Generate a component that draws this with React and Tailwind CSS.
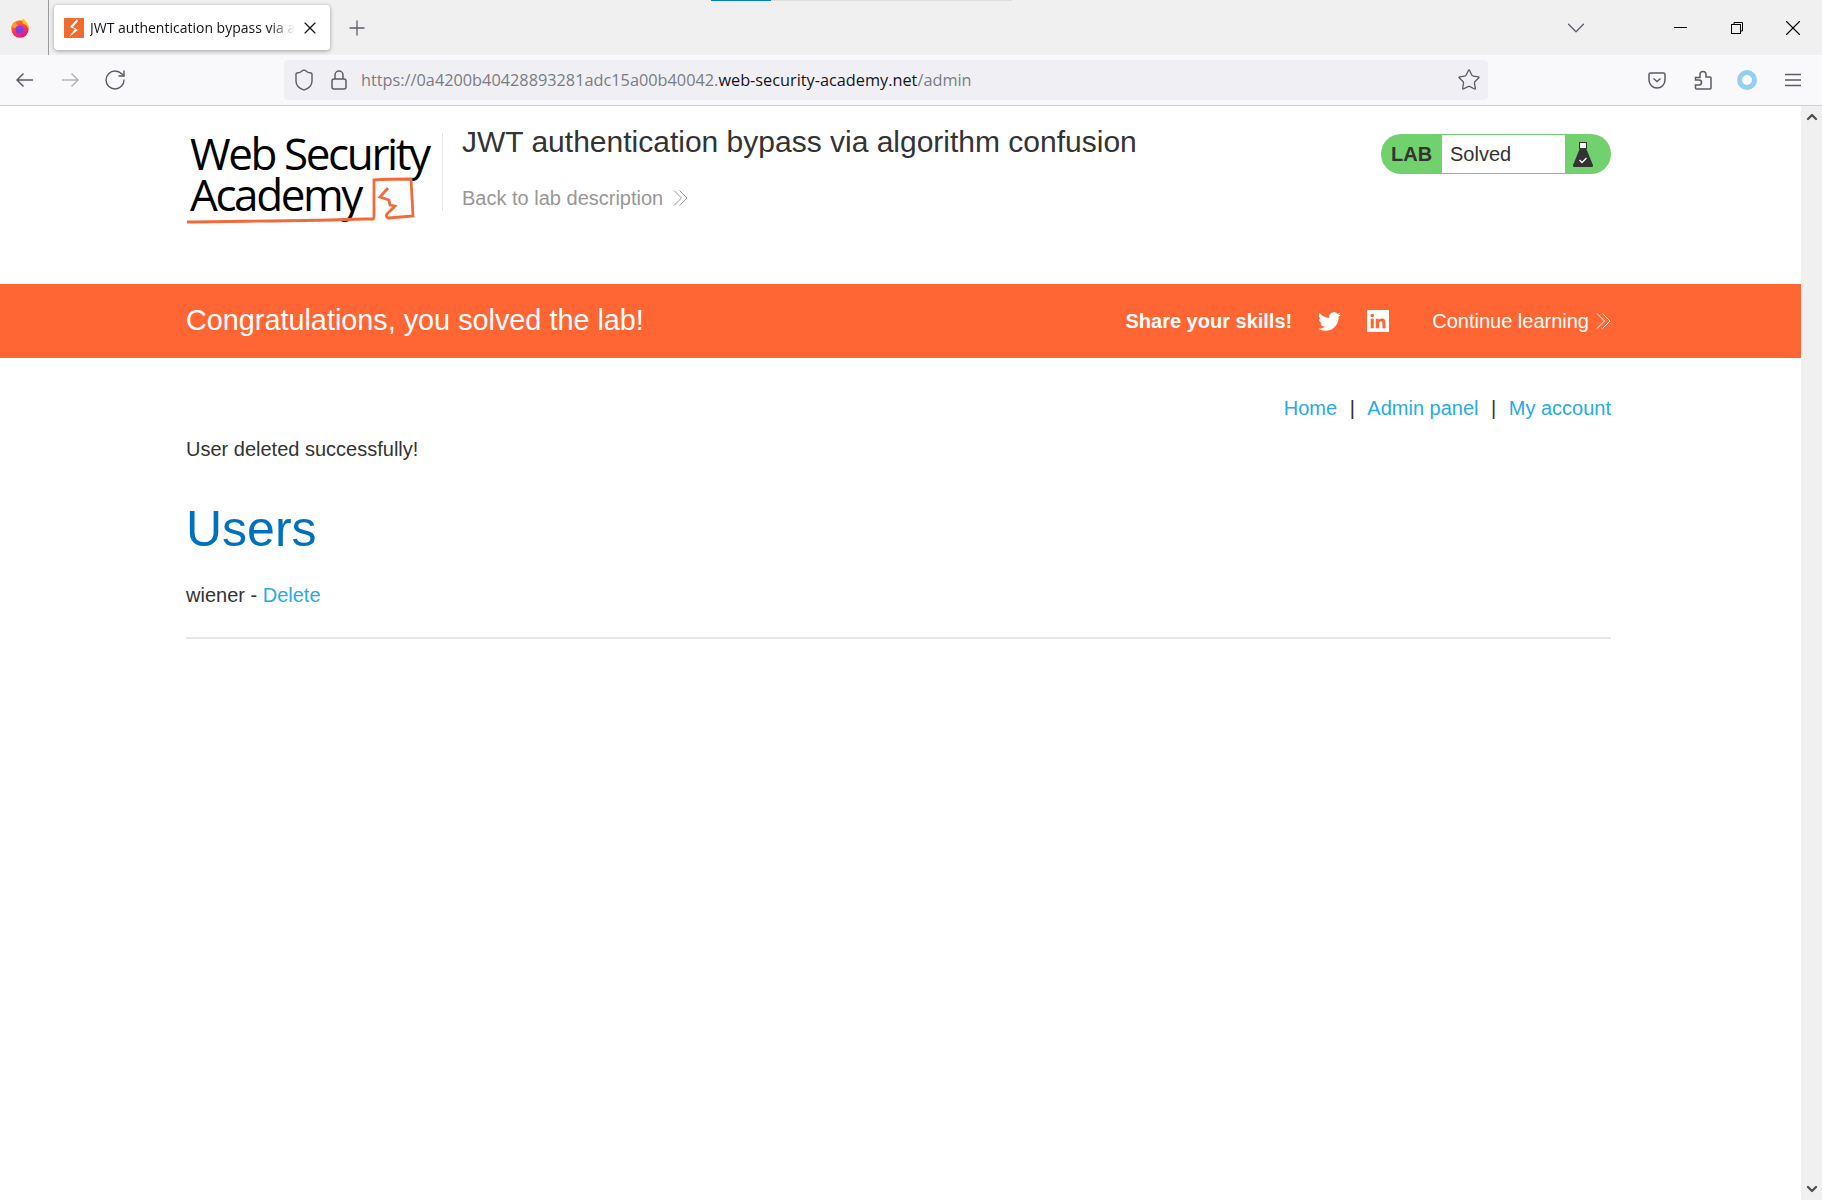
import { ChevronDown, Minus, X, Plus, RotateCw, Shield, Star, ChevronUp } from "lucide-react";

const Chevrons = ({ className }) => (
  <svg viewBox="0 0 15 16" className={className} fill="none" stroke="currentColor" strokeWidth="1">
    <path d="M1 .5L8.500 8 1 15.500M6.500 .5L14 8l-7.500 7.500" />
  </svg>
);

const Firefox = () => (
  <svg viewBox="0 0 20 20" className="h-5 w-5">
    <defs>
      <linearGradient id="ffBody" x1="0" y1="0" x2="0.6" y2="1">
        <stop offset="0" stopColor="#ff8a16" />
        <stop offset="0.6" stopColor="#ff3750" />
        <stop offset="1" stopColor="#e31587" />
      </linearGradient>
    </defs>
    <circle cx="10" cy="11" r="8.700" fill="url(#ffBody)" />
    <path d="M12 .5c4 2 7.500 6 6.700 11.500-.8-3.500-2.700-5.500-6-6.500z" fill="#ffc61e" />
    <path d="M1.500 9C2 6 3.500 4 5.500 3.500 5.500 6 7 7 9 7.500L5 10z" fill="#ff9a2e" />
    <circle cx="9.500" cy="11.500" r="4" fill="#7542e5" />
    <path d="M6 10c1.500-2 5-2 7 0-2 .5-5 .5-7 0z" fill="#b833e1" />
  </svg>
);

const BrowserChrome = () => (
  <div className="font-['Open_Sans',sans-serif]">
    <div className="relative flex h-[55px] items-center bg-[#f0f0f0]">
      <div className="absolute left-[711px] top-0 h-px w-[60px] bg-[#0078d7]" />
      <div className="absolute left-[771px] top-0 h-px w-[241px] bg-[#dedede]" />
      <div className="flex h-full w-[49px] shrink-0 items-center justify-center border-r border-[#9a9a9a] pr-[9px]">
        <Firefox />
      </div>
      <div className="ml-[5px] flex h-[45px] w-[276px] items-center rounded-[4px] bg-white pl-[10px] pr-[10px] shadow-[0_1px_4px_rgba(0,0,0,0.35)]">
        <svg viewBox="0 0 20 20" className="h-5 w-5 shrink-0">
          <rect width="20" height="20" fill="#f26a2e" />
          <path d="M13 1L6 9l5 2-6 8 9-7-5-3 5-6z" fill="#fff" />
        </svg>
        <span className="ml-[6px] whitespace-nowrap text-[14px] text-[#15141a] [mask-image:linear-gradient(to_right,black_88%,transparent)]">
          JWT authentication bypass via a
        </span>
        <X className="ml-auto h-5 w-5 shrink-0 text-[#15141a]" strokeWidth={1.400} />
      </div>
      <Plus className="ml-[15px] h-6 w-6 text-[#5b5b66]" strokeWidth={1.300} />
      <div className="ml-auto flex items-center">
        <ChevronDown className="mr-[79px] h-[30px] w-[30px] text-[#5b5b66]" strokeWidth={1} />
        <Minus className="mr-[40px] h-[21px] w-[21px] text-black" strokeWidth={1.100} />
        <svg viewBox="0 0 12 12" className="mr-[37px] h-3 w-3" fill="none" stroke="#000" strokeWidth="1">
          <rect x="0.500" y="2.500" width="9" height="9" />
          <path d="M3 2.500V.5h8.500V9h-2" />
        </svg>
        <X className="mr-[16px] h-[26px] w-[26px] text-black" strokeWidth={1} />
      </div>
    </div>
    <div className="flex h-[51px] items-center border-b border-[#cfcfd8] bg-[#f9f9fb]">
      <svg viewBox="0 0 18 16" className="ml-[15px] h-4 w-[18px]" fill="none" stroke="#5b5b66" strokeWidth="1.500">
        <path d="M18 8H2M8.500 1.500L2 8l6.500 6.500" />
      </svg>
      <svg viewBox="0 0 18 16" className="ml-[29px] h-4 w-[18px]" fill="none" stroke="#b5b5bb" strokeWidth="1.500">
        <path d="M0 8h16M9.500 1.500L16 8l-6.500 6.500" />
      </svg>
      <RotateCw className="ml-[23px] h-6 w-6 text-[#5b5b66]" strokeWidth={1.400} />
      <div className="ml-[157px] flex h-[40px] w-[1204px] items-center rounded-[4px] bg-[#f0f0f4] pl-[8px] pr-[7px]">
        <Shield className="h-6 w-6 text-[#5b5b66]" strokeWidth={1.400} />
        <svg viewBox="0 0 16 20" className="ml-[15px] h-5 w-4" fill="none" stroke="#5b5b66" strokeWidth="1.500">
          <rect x="1" y="9" width="14" height="10" rx="2" />
          <path d="M4 9V5a4 4 0 0 1 8 0v4" />
        </svg>
        <span className="ml-[14px] whitespace-nowrap text-[16.300px] text-[#7b7b82]">
          https://0a4200b40428893281adc15a00b40042.<span className="text-[#15141a]">web-security-academy.net</span>/admin
        </span>
        <Star className="ml-auto h-6 w-6 text-[#5b5b66]" strokeWidth={1.300} />
      </div>
      <svg viewBox="0 0 18 18" className="ml-[160px] h-[18px] w-[18px]" fill="none" stroke="#5b5b66" strokeWidth="1.500">
        <path d="M1 3.500A1.500 1.500 0 0 1 2.500 2h13A1.500 1.500 0 0 1 17 3.500V9a8 8 0 0 1-16 0z" />
        <path d="M5.500 7.500L9 10.500l3.500-3" />
      </svg>
      <svg viewBox="0 0 18 20" className="ml-[28px] h-5 w-[18px]" fill="none" stroke="#5b5b66" strokeWidth="1.500">
        <path d="M1.500 7.500H6V4.500a3 3 0 0 1 6 0V7h4a1 1 0 0 1 1 1v10a1 1 0 0 1-1 1H2.500a1 1 0 0 1-1-1v-3H5a2.500 2.500 0 0 0 0-5H1.500z" />
      </svg>
      <div className="ml-[25px] h-5 w-5 rounded-full border-[5px] border-[#93cff5] bg-white" />
      <svg viewBox="0 0 16 14" className="ml-[28px] h-[14px] w-4" fill="none" stroke="#5b5b66" strokeWidth="1.500">
        <path d="M0 1.500h16M0 7h16M0 12.500h16" />
      </svg>
    </div>
  </div>
);

const Logo = () => (
  <div className="relative h-[90px] w-[256px] shrink-0 pl-[4px] font-['Open_Sans',sans-serif] text-[44px] font-medium leading-[41px] tracking-[-2.400px] text-black">
    <div className="whitespace-nowrap">Web Security</div>
    <div className="whitespace-nowrap">Academy</div>
    <svg viewBox="0 0 240 50" className="absolute left-0 top-[42px] h-[50px] w-[240px]" fill="none" stroke="#f26a3a" strokeWidth="2.800">
      <path d="M1 47c60-1 120-1 178-3h8c1-1 1-1 1-2V5c14-1 27-1 37-1l2 37-24 2c-3 0-3-3-2-4l8-8-5-1-1-5-9-3 8-9" />
    </svg>
  </div>
);

const FlaskIcon = () => (
  <svg viewBox="0 0 20 25" className="h-[25px] w-5">
    <rect x="6.500" y="0.500" width="7" height="6" fill="#fff" stroke="#333" strokeWidth="1" />
    <path d="M7 6h6l6.700 16.500A1.500 1.500 0 0 1 18.300 25H1.700a1.500 1.500 0 0 1-1.400-2.500z" fill="#333" />
    <path d="M6.500 18l2.500 2.500 4.500-4.500" fill="none" stroke="#fff" strokeWidth="1.300" />
  </svg>
);

const Twitter = () => (
  <svg viewBox="0 0 24 24" className="h-[23px] w-[23px]" fill="#fff">
    <path d="M23.950 4.570a10 10 0 0 1-2.820.77 4.960 4.960 0 0 0 2.160-2.720c-.95.55-2 .95-3.130 1.180a4.920 4.920 0 0 0-8.380 4.480C7.690 8.100 4.070 6.130 1.640 3.160a4.820 4.820 0 0 0-.66 2.470c0 1.710.87 3.210 2.190 4.100a4.900 4.900 0 0 1-2.230-.61v.06a4.920 4.920 0 0 0 3.950 4.830 5 5 0 0 1-2.210.08 4.940 4.940 0 0 0 4.600 3.420A9.870 9.870 0 0 1 0 19.540a14 14 0 0 0 7.560 2.210c9.050 0 14-7.500 14-13.980 0-.21 0-.42-.02-.63A9.940 9.940 0 0 0 24 4.590z" />
  </svg>
);

const Linkedin = () => (
  <svg viewBox="0 0 24 24" className="h-[22px] w-[22px]">
    <rect width="24" height="24" rx="1" fill="#fff" />
    <path d="M4 9.500h3.400V20H4zM5.700 4a2 2 0 1 1 0 4 2 2 0 0 1 0-4zM9.600 9.500h3.200V11c.5-.9 1.600-1.800 3.300-1.800 3.500 0 4.100 2.300 4.100 5.300V20h-3.400v-4.900c0-1.200 0-2.700-1.600-2.700s-1.900 1.300-1.900 2.600v5H9.600z" fill="#ff6633" />
  </svg>
);

export default function App() {
  return (
    <div className="flex h-[1200px] flex-col overflow-hidden bg-white font-['Liberation_Sans',Arial,sans-serif] text-[#333332]">
      <BrowserChrome />
      <div className="flex min-h-0 flex-1">
        <main className="min-w-0 flex-1">
          <header className="ml-[186px] mr-[190px] flex h-[178px] items-start pt-[27px]">
            <Logo />
            <div className="h-[78px] border-l border-[#e6e6e6]" />
            <div className="ml-[19px] mt-[-6px]">
              <h2 className="text-[30px] leading-[30px]">JWT authentication bypass via algorithm confusion</h2>
              <a className="mt-[26px] flex items-center text-[20px] leading-[30px] text-[#999795]">
                Back to lab description
                <Chevrons className="ml-[10px] h-4 w-[15px]" />
              </a>
            </div>
            <div className="ml-auto mt-[1px] flex h-[40px] w-[230px] items-center rounded-[20px] bg-[#70d16d] p-px">
              <span className="w-[60px] pl-[9px] text-[20px] font-bold">LAB</span>
              <span className="flex h-[38px] w-[123px] items-center bg-white pl-[8px] text-[20px]">Solved</span>
              <span className="flex flex-1 items-center justify-center pr-[9px]">
                <FlaskIcon />
              </span>
            </div>
          </header>
          <section className="flex h-[74px] items-center bg-[#ff6633] pl-[186px] pr-[190px] text-white">
            <h4 className="text-[28.800px]">Congratulations, you solved the lab!</h4>
            <div className="ml-auto flex items-center">
              <span className="text-[20px] font-bold">Share your skills!</span>
              <span className="ml-[26px]"><Twitter /></span>
              <span className="ml-[26px]"><Linkedin /></span>
              <a className="ml-[43px] flex items-center text-[20px]">
                Continue learning
                <Chevrons className="ml-[7px] h-4 w-[15px]" />
              </a>
            </div>
          </section>
          <section className="ml-[186px] mr-[190px] text-[20px] leading-[30px]">
            <nav className="flex justify-end pt-[35px] text-[#29abe2]">
              <a>Home</a>
              <span className="mx-[12.500px] text-[#333332]">|</span>
              <a>Admin panel</a>
              <span className="mx-[12.500px] text-[#333332]">|</span>
              <a>My account</a>
            </nav>
            <p className="mt-[11px]">User deleted successfully!</p>
            <h1 className="mt-[35px] text-[50px] leading-[60px] text-[#0071bc]">Users</h1>
            <p className="mt-[21px]">
              wiener - <a className="text-[#29abe2]">Delete</a>
            </p>
            <hr className="mt-[27px] border-t-2 border-[#e6e6e6]" />
          </section>
        </main>
        <aside className="flex w-[21px] shrink-0 flex-col items-center justify-between bg-[#f0f0f0] py-[3px]">
          <ChevronUp className="h-[16px] w-[16px] text-[#505050]" strokeWidth={3.500} />
          <ChevronDown className="h-[16px] w-[16px] text-[#505050]" strokeWidth={3.500} />
        </aside>
      </div>
    </div>
  );
}
